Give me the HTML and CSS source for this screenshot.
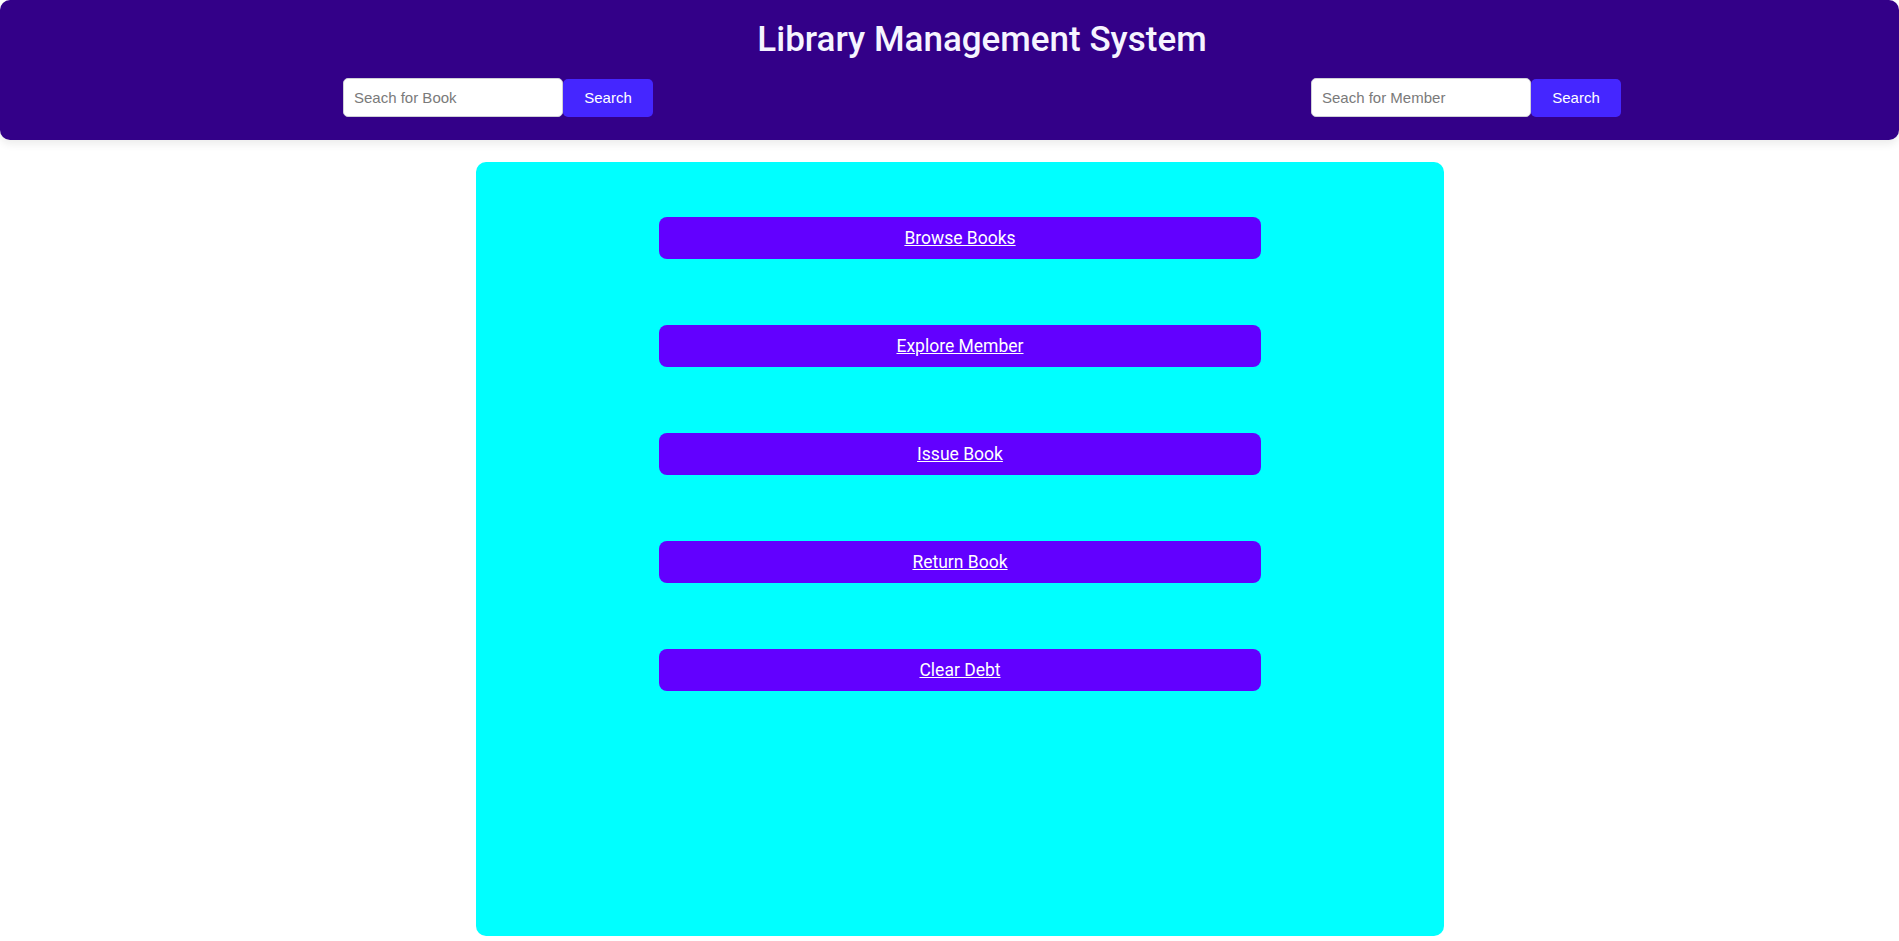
FILE: index.html
```html
<!DOCTYPE html>
<html lang="en">
<head>
<meta charset="utf-8">
<title>Library Management System</title>
<link rel="stylesheet" href="styles.css">
</head>
<body>
<header class="topbar">
  <h1 class="title">Library Management System</h1>
  <div class="searches">
    <form class="search">
      <input class="search-input" type="text" placeholder="Seach for Book">
      <button class="search-btn" type="button">Search</button>
    </form>
    <form class="search">
      <input class="search-input" type="text" placeholder="Seach for Member">
      <button class="search-btn" type="button">Search</button>
    </form>
  </div>
</header>
<main class="panel">
  <nav class="menu">
    <a class="menu-btn" href="#">Browse Books</a>
    <a class="menu-btn" href="#">Explore Member</a>
    <a class="menu-btn" href="#">Issue Book</a>
    <a class="menu-btn" href="#">Return Book</a>
    <a class="menu-btn" href="#">Clear Debt</a>
  </nav>
</main>
</body>
</html>
```
FILE: styles.css
```css
html, body {
  margin: 0;
  padding: 0;
  background: #ffffff;
  font-family: Roboto, "Liberation Sans", sans-serif;
  overflow: hidden;
}
.topbar {
  background: #330088;
  border-radius: 10px;
  box-shadow: 0 4px 8px rgba(0, 0, 0, 0.08);
  height: 140px;
  box-sizing: border-box;
  padding: 19px 0 0 65px;
}
.title {
  margin: 0;
  color: #f6f4ff;
  font-family: Roboto, sans-serif;
  font-weight: 500;
  font-size: 35px;
  line-height: 42px;
  text-align: center;
}
.searches {
  display: flex;
  justify-content: space-between;
  padding: 0 278px 0 278px;
  margin-top: 17px;
}
.search {
  display: flex;
  align-items: center;
  margin: 0;
}
.search-input {
  width: 220px;
  height: 39px;
  box-sizing: border-box;
  border: 1px solid #cfcfd8;
  border-radius: 5px;
  padding: 0 10px;
  font-family: "Liberation Sans", Arial, sans-serif;
  font-size: 15px;
  color: #333;
  background: #fff;
  outline: none;
}
.search-input::placeholder {
  color: #7a7a7a;
}
.search-btn {
  width: 90px;
  height: 38px;
  border: none;
  border-radius: 5px;
  background: #4526ff;
  color: #ffffff;
  font-family: "Liberation Sans", Arial, sans-serif;
  font-size: 15px;
  padding: 0;
}
.panel {
  width: 968px;
  height: 774px;
  box-sizing: border-box;
  margin: 22px 0 0 476px;
  background: #00ffff;
  border-radius: 10px;
  padding-top: 55px;
}
.menu {
  display: flex;
  flex-direction: column;
  align-items: center;
  gap: 66px;
}
.menu-btn {
  display: block;
  width: 602px;
  height: 42px;
  line-height: 42px;
  box-sizing: border-box;
  background: #6200ff;
  border-radius: 8px;
  color: #ffffff;
  text-align: center;
  font-family: Roboto, sans-serif;
  font-size: 17.5px;
  text-decoration: underline;
}
```
